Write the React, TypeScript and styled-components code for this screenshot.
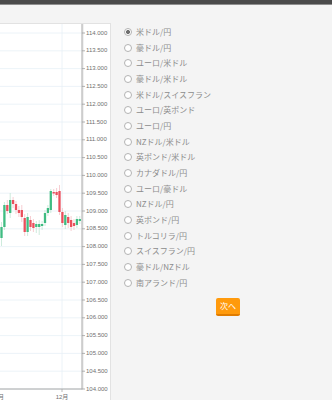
import React from "react";
import styled, { createGlobalStyle } from "styled-components";

const GlobalStyle = createGlobalStyle`
  html, body { margin: 0; padding: 0; background: #f4f4f4; }
  body { font-family: "Noto Sans CJK JP", "Noto Sans", sans-serif; overflow: hidden; }
`;

const Page = styled.div`
  width: 332px;
  height: 400px;
  display: flex;
  flex-direction: column;
`;

const TopBar = styled.div`
  flex: none;
  height: 4px;
  background: #4b4b4b;
  border-bottom: 1px solid #8f8f8f;
`;

const Main = styled.div`
  flex: 1;
  display: flex;
  min-height: 0;
`;

const ChartPanel = styled.div`
  flex: none;
  margin-top: 18px;
  width: 111px;
  box-sizing: border-box;
  background: #fff;
  border-top: 1px solid #e2e2e2;
  border-right: 1px solid #e2e2e2;
  overflow: hidden;
`;

const ChartSvg = styled.svg`
  display: block;
`;

const RightPanel = styled.div`
  flex: 1;
  display: flex;
  flex-direction: column;
  padding: 19px 0 0 13px;
`;

const List = styled.div`
  display: flex;
  flex-direction: column;
`;

const Row = styled.label`
  display: flex;
  align-items: center;
  gap: 4px;
  height: 15.7px;
  font-size: 8px;
  line-height: 1;
  color: #8c8c8c;
  white-space: nowrap;
`;

const Radio = styled.input`
  appearance: none;
  -webkit-appearance: none;
  flex: none;
  width: 8px;
  height: 8px;
  margin: 0;
  box-sizing: border-box;
  border: 1px solid #b3b3b3;
  border-radius: 50%;
  background: #fff;
  &:checked {
    background: radial-gradient(circle, #6f6f6f 0 1.7px, #fff 2.3px);
  }
`;

const NextButton = styled.button`
  align-self: center;
  margin-top: 7.5px;
  width: 24px;
  height: 18px;
  padding: 0;
  box-sizing: border-box;
  border: none;
  border-bottom: 2px solid #e07c00;
  border-radius: 2px;
  background: #ff9a0c;
  color: #fff;
  font-family: inherit;
  font-size: 8px;
  line-height: 16px;
`;

const pairs = [
  "米ドル/円",
  "豪ドル/円",
  "ユーロ/米ドル",
  "豪ドル/米ドル",
  "米ドル/スイスフラン",
  "ユーロ/英ポンド",
  "ユーロ/円",
  "NZドル/米ドル",
  "英ポンド/米ドル",
  "カナダドル/円",
  "ユーロ/豪ドル",
  "NZドル/円",
  "英ポンド/円",
  "トルコリラ/円",
  "スイスフラン/円",
  "豪ドル/NZドル",
  "南アランド/円",
];

// candles in page y coords: [up, top, bottom, wickTop, wickBottom]
const candles: [boolean, number, number, number, number][] = [
  [true, 227, 238, 222, 246],
  [true, 205, 227, 202, 230],
  [false, 205, 211, 200, 214],
  [true, 200, 213, 193, 218],
  [false, 200, 204, 197, 208],
  [false, 204, 210, 201, 214],
  [false, 210, 213, 206, 217],
  [false, 210, 217, 205, 222],
  [false, 218, 232, 214, 236],
  [true, 217, 232, 213, 236],
  [false, 220, 227, 216, 231],
  [false, 223, 228, 219, 232],
  [true, 224, 227, 221, 233],
  [true, 224, 227, 220, 235],
  [true, 224, 226, 221, 230],
  [true, 213, 223, 210, 226],
  [true, 208, 213, 205, 216],
  [true, 191, 210, 189, 213],
  [false, 192, 193.5, 189, 196],
  [false, 192, 195, 188, 198],
  [false, 191, 212, 185, 215],
  [false, 212, 223, 208, 227],
  [true, 215, 225, 211, 229],
  [false, 217, 223, 213, 228],
  [false, 220, 227, 216, 231],
  [false, 223, 226, 219, 230],
  [true, 219, 225, 216, 228],
  [true, 219, 221, 216, 224],
];

const OFF = 24;
const Y0 = 33 - OFF;
const STEP = 17.8;
const AXIS_X = 82;
const BOTTOM = Y0 + STEP * 20;

const Chart: React.FC = () => {
  const labels = Array.from({ length: 21 }, (_, i) => ({
    y: Y0 + i * STEP,
    text: (114 - i * 0.5).toFixed(3),
  }));
  return (
    <ChartSvg width={110} height={376} viewBox="0 0 110 376">
      {labels.map((l) => (
        <line key={"g" + l.text} x1={0} x2={AXIS_X} y1={l.y} y2={l.y} stroke="#e7f0f6" strokeWidth={0.8} />
      ))}
      <line x1={62} x2={62} y1={0} y2={BOTTOM} stroke="#e7f0f6" strokeWidth={0.8} />
      {candles.map(([up, t, b, wt, wb], i) => {
        const cx = 1.5 + i * 2.9;
        return (
          <g key={i}>
            <line
              x1={cx}
              x2={cx}
              y1={wt - OFF}
              y2={wb - OFF}
              stroke={up ? "#b9e3cf" : "#f4b9bf"}
              strokeWidth={0.7}
            />
            <rect
              x={cx - 1.15}
              y={t - OFF}
              width={2.3}
              height={Math.max(b - t, 1)}
              fill={up ? "#3fbc82" : "#ea4f5c"}
            />
          </g>
        );
      })}
      <line x1={AXIS_X + 1} x2={AXIS_X + 1} y1={0} y2={BOTTOM} stroke="#e4e4e4" strokeWidth={1} />
      <line x1={AXIS_X} x2={AXIS_X} y1={0} y2={BOTTOM + 0.5} stroke="#a8a8a8" strokeWidth={1} />
      <line x1={0} x2={AXIS_X} y1={BOTTOM} y2={BOTTOM} stroke="#a8a8a8" strokeWidth={1} />
      <line x1={62} x2={62} y1={BOTTOM} y2={BOTTOM + 3} stroke="#a8a8a8" strokeWidth={0.8} />
      {labels.map((l) => (
        <g key={"t" + l.text}>
          <line x1={AXIS_X} x2={AXIS_X + 3} y1={l.y} y2={l.y} stroke="#a0a0a0" strokeWidth={0.8} />
          <text
            x={86}
            y={l.y}
            dominantBaseline="middle"
            fontSize={6}
            fill="#707070"
            fontFamily='"Liberation Sans", Arial, sans-serif'
          >
            {l.text}
          </text>
        </g>
      ))}
      <text
        x={-2}
        y={BOTTOM + 8}
        textAnchor="middle"
        dominantBaseline="middle"
        fontSize={6}
        fill="#707070"
        fontFamily='"Liberation Sans", "Noto Sans CJK JP", sans-serif'
      >
        11月
      </text>
      <text
        x={62}
        y={BOTTOM + 8}
        textAnchor="middle"
        dominantBaseline="middle"
        fontSize={6}
        fill="#707070"
        fontFamily='"Liberation Sans", "Noto Sans CJK JP", sans-serif'
      >
        12月
      </text>
    </ChartSvg>
  );
};

const App: React.FC = () => {
  const [selected, setSelected] = React.useState(0);
  return (
    <>
      <GlobalStyle />
      <Page>
        <TopBar />
        <Main>
          <ChartPanel>
            <Chart />
          </ChartPanel>
          <RightPanel>
            <List>
              {pairs.map((p, i) => (
                <Row key={p}>
                  <Radio
                    type="radio"
                    name="pair"
                    checked={selected === i}
                    onChange={() => setSelected(i)}
                  />
                  {p}
                </Row>
              ))}
            </List>
            <NextButton type="button">次へ</NextButton>
          </RightPanel>
        </Main>
      </Page>
    </>
  );
};

export default App;
